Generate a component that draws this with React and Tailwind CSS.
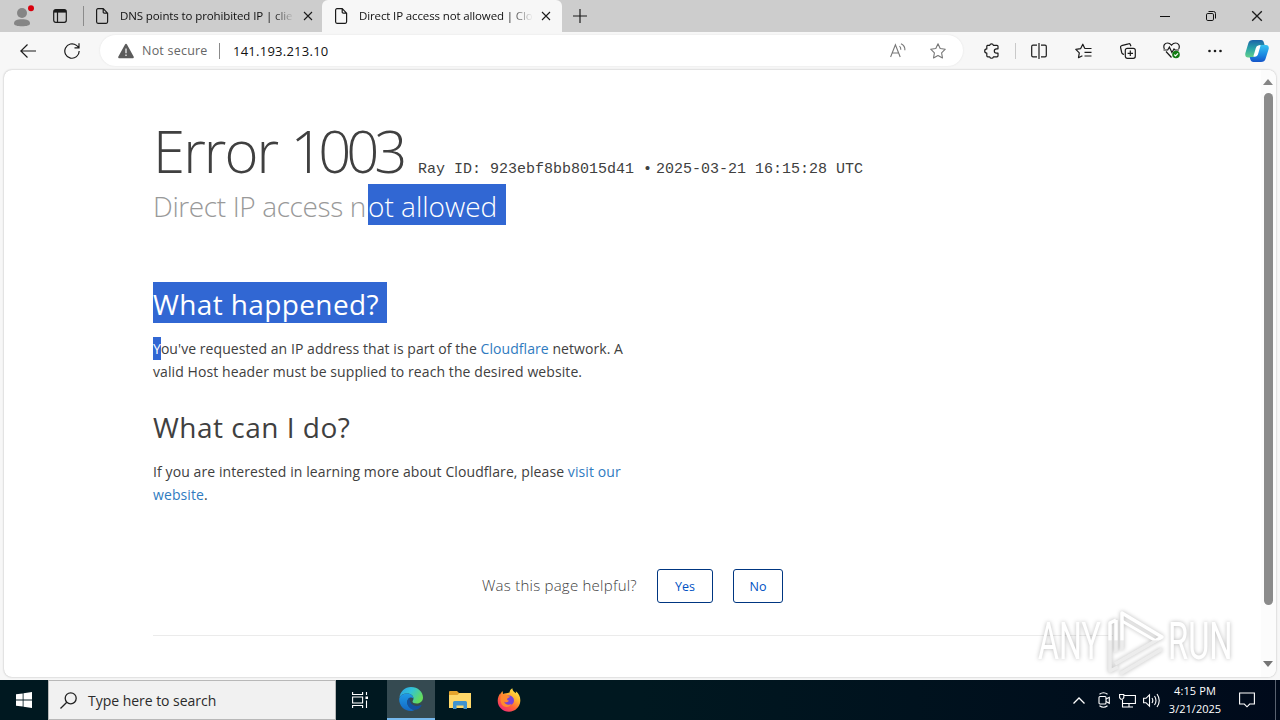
import React from 'react';

const UI = "font-['Open_Sans','Noto_Sans',sans-serif]";

function PageIcon() {
    return (
        <svg className="w-[14px] h-[16px] shrink-0" viewBox="0 0 14 16" fill="none" stroke="#1b1b1b" strokeWidth="1.2">
            <path d="M1.6 2.2C1.6 1.3 2.2.7 3 .7h5.2l4.4 4.5v8.6c0 .9-.6 1.5-1.4 1.5H3c-.8 0-1.4-.6-1.4-1.5z M8.2.7v3.3c0 .8.4 1.2 1.2 1.2h3.2" />
        </svg>
    );
}

function CrossIcon({ className }) {
    return (
        <svg className={className} viewBox="0 0 10 10" fill="none" stroke="#1b1b1b" strokeWidth="1.1">
            <path d="M1 1l8 8M9 1L1 9" />
        </svg>
    );
}

function TabStrip() {
    return (
        <div className="h-8 bg-[#cdcdcd] flex items-center shrink-0">
            <svg className="w-[22px] h-[24px] ml-[13px] shrink-0" viewBox="0 0 22 24">
                <circle cx="9" cy="9" r="5" fill="#858585" />
                <path d="M1 19.5C1 16.5 4 15.2 9 15.2s8 1.3 8 4.3c0 1.8-3.3 2.8-8 2.8s-8-1-8-2.8z" fill="#858585" />
                <circle cx="18" cy="4.2" r="3" fill="#d9000d" />
            </svg>
            <svg className="w-[14px] h-[14px] ml-[18px] shrink-0" viewBox="0 0 14 14" fill="none" stroke="#1b1b1b" strokeWidth="1.2">
                <rect x=".7" y=".7" width="12.6" height="12.6" rx="2" />
                <path d="M1 2.3h12" strokeWidth="2.6" />
                <path d="M4.5 3v10" />
            </svg>
            <div className="w-px h-5 bg-[#8b8b8b] ml-4" />
            <div className="flex items-center w-[238px] h-8 pl-[11px] pr-[9px] shrink-0">
                <PageIcon />
                <div className="ml-[11px] w-[174px] whitespace-nowrap text-[11.5px] tracking-[-0.11px] text-[#111] [mask-image:linear-gradient(to_right,#000_88%,transparent)]">
                    DNS points to prohibited IP | clie
                </div>
                <CrossIcon className="w-[10px] h-[10px] ml-auto" />
            </div>
            <div className="flex items-center w-[240px] h-8 pl-[12px] pr-[11px] bg-[#f7f7f7] rounded-t-md shrink-0">
                <PageIcon />
                <div className="ml-[11px] w-[174px] whitespace-nowrap text-[11.5px] tracking-[-0.13px] text-[#111] [mask-image:linear-gradient(to_right,#000_86%,transparent)]">
                    Direct IP access not allowed | Clo
                </div>
                <CrossIcon className="w-[10px] h-[10px] ml-auto" />
            </div>
            <svg className="w-[14px] h-[14px] ml-[11px]" viewBox="0 0 14 14" stroke="#1b1b1b" strokeWidth="1.2">
                <path d="M0 7h14M7 0v14" />
            </svg>
            <div className="ml-auto flex items-center pr-[17px]">
                <svg className="w-[10px] h-[10px]" viewBox="0 0 10 10" stroke="#111"><path d="M0 5.5h10" /></svg>
                <svg className="w-[10px] h-[10px] ml-[36px]" viewBox="0 0 10 10" fill="none" stroke="#111">
                    <rect x=".5" y="2.5" width="7" height="7" rx="1.3" />
                    <path d="M2.5 .5H7.5a2 2 0 012 2v5" />
                </svg>
                <CrossIcon className="w-[12px] h-[12px] ml-[35px]" />
            </div>
        </div>
    );
}

function CopilotIcon() {
    return (
        <svg className="w-6 h-6 shrink-0" viewBox="0 0 24 24">
            <defs>
                <linearGradient id="copL" x1="0" y1="0" x2="0" y2="1">
                    <stop offset="0" stopColor="#1b63a8" />
                    <stop offset=".5" stopColor="#2aa5a8" />
                    <stop offset="1" stopColor="#63d08b" />
                </linearGradient>
                <linearGradient id="copR" x1="0" y1="0" x2="0" y2="1">
                    <stop offset="0" stopColor="#36c3f2" />
                    <stop offset=".6" stopColor="#1a86e0" />
                    <stop offset="1" stopColor="#1554c8" />
                </linearGradient>
            </defs>
            <path d="M8 1h8c1.8 0 2.600 1.200 3 3l.6 2h-4c-2 0-2.800 1-3.300 2.600L10 16.500c-.6 1.500-1.400 2-3 2H3C.8 18.500-.2 16.600.4 14L3.400 4C4 2 5.500 1 8 1z" fill="url(#copL)" />
            <path d="M16 23H8.500c-1.800 0-2.800-1-3.300-3l-.5-2h3.500c2 0 2.900-.8 3.400-2.400l2.300-7.500C14.500 6.500 15.300 6 17 6h4c2.200 0 3.300 1.800 2.600 4.300L20.500 20c-.6 2-2 3-4.500 3z" fill="url(#copR)" />
            <path d="M10.800 9.200C11.400 7.300 12.300 6.600 14 6.600h1.600L13 15.200c-.5 1.600-1.500 2.300-3.200 2.300H8.300z" fill="#fff" />
        </svg>
    );
}

function Toolbar() {
    return (
        <div className="h-[37px] flex items-center shrink-0 pl-5">
            <svg className="w-4 h-4" viewBox="0 0 16 16" fill="none" stroke="#1b1b1b" strokeWidth="1.2">
                <path d="M16 8H.8M7.5 1.5L.8 8l6.700 6.500" />
            </svg>
            <svg className="w-4 h-4 ml-7" viewBox="0 0 16 16" fill="none" stroke="#1b1b1b" strokeWidth="1.2">
                <path d="M15.200 8A7.200 7.200 0 1 1 12.500 2.400L15 4.600M15 .3v4.500h-4.500" />
            </svg>
            <div className="ml-5 w-[863px] h-[31px] rounded-full bg-white flex items-center pl-[18px] pr-[17px] shrink-0 shadow-[0_0_2px_#e0e0e0]">
                <svg className="w-4 h-4" viewBox="0 0 16 16">
                    <path d="M7 1.500c.5-.9 1.500-.9 2 0l6.600 12c.5.900 0 1.700-1 1.700H1.400c-1 0-1.500-.8-1-1.700z" fill="#5b5b5b" />
                    <path d="M8 5.500v4.700M8 11.500v1.600" stroke="#ddd" strokeWidth="1.5" />
                </svg>
                <span className="ml-2 pt-[2px] w-[67px] whitespace-nowrap text-[12.5px] text-[#666] tracking-[0.22px]">Not secure</span>
                <span className="ml-[10px] w-px h-4 bg-[#8a8a8a]" />
                <span className="ml-[13px] pt-[2px] whitespace-nowrap text-[13px] text-[#111] tracking-[0.25px]">141.193.213.10</span>
                <svg className="w-4 h-[15px] ml-auto" viewBox="0 0 16 15" fill="none" stroke="#777" strokeWidth="1.1">
                    <path d="M.6 14L5.400 1.800 10.200 14M2.200 10h6.400M9.500 3.200c1 .9 1.400 2 1.300 3.500M11 .8c2.600 1.300 4.100 3.600 3.900 6.400" />
                </svg>
                <svg className="w-4 h-4 ml-6" viewBox="0 0 16 16" fill="none" stroke="#777" strokeWidth="1.1" strokeLinejoin="round">
                    <path d="M8 .8l2.200 4.700 5.100.7-3.700 3.600.9 5.200L8 12.500 3.500 15l.9-5.200L.7 6.200l5.100-.7z" />
                </svg>
            </div>
            <svg className="w-4 h-4 ml-[21px]" viewBox="0 0 16 16" fill="none" stroke="#1b1b1b" strokeWidth="1.2" strokeLinejoin="round">
                <path d="M3.300 2.300h2.400a1.900 1.900 0 013.700 0h3.600q1 0 1 1v2.500H12.500a2.200 2.200 0 000 4.400H14v2.600q0 1-1 1H9.400a1.900 1.900 0 01-3.700 0H3.800q-1 0-1-1v-2.700a2.100 2.100 0 010-4.200V3.300q0-1 1-1z" />
            </svg>
            <div className="w-px h-4 bg-[#c9c9c9] ml-[15px]" />
            <svg className="w-4 h-4 ml-[15px]" viewBox="0 0 16 16" fill="none" stroke="#1b1b1b" strokeWidth="1.2">
                <path d="M6 2.200H2Q.7 2.200.7 3.500v9Q.7 13.800 2 13.800h4M10 2.200h4q1.300 0 1.300 1.300v9q0 1.300-1.300 1.300h-4M8 0v16" />
            </svg>
            <svg className="w-[17px] h-4 ml-[28px]" viewBox="0 0 17 16" fill="none" stroke="#1b1b1b" strokeWidth="1.2" strokeLinejoin="round">
                <path d="M9.800 5.500L7.800 1.200 5.700 5.600.8 6.300l3.500 3.500-.8 4.900 3.900-2M9.800 5.500h6.700M9.500 9.300h7M9.500 13h7" />
            </svg>
            <svg className="w-4 h-4 ml-[28px]" viewBox="0 0 16 16" fill="none" stroke="#1b1b1b" strokeWidth="1.2" strokeLinejoin="round">
                <rect x="5.3" y="5.3" width="10" height="10" rx="2" />
                <path d="M10.300 7.600v5.400M7.600 10.300H13M4 11.500l-.9-.4Q2 10.700 1.700 9.500L.6 4.500Q.3 3.100 1.600 2.700L8.500.8q1.300-.4 1.900.9l.5 1.500" />
            </svg>
            <svg className="w-[18px] h-[17px] ml-[27px]" viewBox="0 0 18 17" fill="none" stroke="#1b1b1b" strokeWidth="1.2">
                <path d="M1.400 7C-.2 3.500 1.900 1 4.500 1 6.500 1 7.500 2 8.500 3.200 9.500 2 10.700 1 12.600 1c2.700 0 4.700 2.600 3.100 6M3 9.500l5.500 6M.5 8h4.200l1.700-3 2.500 5.500L11 7l1 1h4" />
                <circle cx="13" cy="12.5" r="3.8" fill="#127c13" stroke="none" />
                <path d="M11.200 12.600l1.300 1.300 2.500-2.600" stroke="#fff" />
            </svg>
            <svg className="w-[14px] h-4 ml-[27px]" viewBox="0 0 14 16" fill="#1b1b1b">
                <circle cx="1.500" cy="8" r="1.3" /><circle cx="7" cy="8" r="1.3" /><circle cx="12.500" cy="8" r="1.3" />
            </svg>
            <div className="ml-[23px]"><CopilotIcon /></div>
        </div>
    );
}

function ErrorPage() {
    return (
        <div className="w-[960px] ml-[149px] pt-[50px] text-[#404040] whitespace-nowrap">
            <div className="h-[63px] flex items-baseline">
                <h1 className="text-[58px] leading-[62px] font-light tracking-[-1.9px] w-[265px]">Error <span className="tracking-[-5.2px]">1003</span></h1>
                <span className="font-['Liberation_Mono',monospace] text-[15px] leading-[20px] w-[219px]">Ray ID: 923ebf8bb8015d41</span>
                <span className="ml-[6px] w-[13px] font-['Liberation_Mono',monospace] text-[15px]">•</span>
                <span className="font-['Liberation_Mono',monospace] text-[15px]">2025-03-21 16:15:28 UTC</span>
            </div>
            <h2 className="h-[41px] mt-px text-[28px] leading-[44px] font-light text-[#999] flex">
                <span className="w-[215px] tracking-[-0.38px]">Direct IP access n</span>
                <span className="w-[138px] h-[41px] bg-[#3167d3] text-white">ot allowed</span>
            </h2>
            <h2 className="mt-[57px] w-[234px] h-[41px] text-[28px] leading-[44px] tracking-[0.38px] bg-[#3167d3] text-white">What happened?</h2>
            <p className="mt-[15px] text-[14px] leading-[22.5px] tracking-[0.06px]">
                <span className="bg-[#3167d3] text-white py-[2px]">Y</span>ou've requested an IP address that is part of the <a className="text-[#2f7bbf]">Cloudflare</a> network. A<br />
                <span className="tracking-[0.09px]">valid Host header must be supplied to reach the desired website.</span>
            </p>
            <h2 className="mt-[22px] h-[41px] text-[28px] leading-[44px] tracking-[0.5px]">What can I do?</h2>
            <p className="mt-[15px] text-[14px] leading-[22.5px] tracking-[0.09px]">
                If you are interested in learning more about Cloudflare, please <a className="text-[#2f7bbf]">visit our<br />website</a>.
            </p>
            <div className="mt-[63px] pl-[329px] h-[34px] flex items-center">
                <span className="w-[156px] pb-px text-[15px] font-light tracking-[0.24px]">Was this page helpful?</span>
                <button className="ml-[19px] pt-[2px] w-[56px] h-[34px] border border-[#003681] rounded-[3px] text-[12.5px] text-[#0051c3]">Yes</button>
                <button className="ml-5 pt-[2px] w-[50px] h-[34px] border border-[#003681] rounded-[3px] text-[12.5px] text-[#0051c3]">No</button>
            </div>
            <div className="mt-8 h-px bg-[#ebebeb]" />
        </div>
    );
}

function Watermark() {
    return (
        <svg className="absolute left-[1030px] top-[602px] w-[210px] h-[76px] drop-shadow-[0_0_2px_rgba(0,0,0,0.28)]" viewBox="0 0 210 76">
            <defs>
                <linearGradient id="wm" x1="0" y1="0" x2="0" y2="76" gradientUnits="userSpaceOnUse">
                    <stop offset=".5" stopColor="#fff" />
                    <stop offset=".51" stopColor="#ececec" />
                </linearGradient>
            </defs>
            <g fill="url(#wm)" fontFamily="Roboto, sans-serif" fontSize="51">
                <text transform="translate(8 57) scale(.66 1)" textLength="95" lengthAdjust="spacingAndGlyphs">ANY</text>
                <text transform="translate(138 57) scale(.66 1)" textLength="98" lengthAdjust="spacingAndGlyphs">RUN</text>
            </g>
            <g fill="none" stroke="url(#wm)" strokeWidth="3.5" strokeLinejoin="round">
                <path d="M92 48V11l40 24-47 27" />
                <path d="M86 18l-6 3v48l8-4M86 18v32M90 72l42-25" />
                <path d="M92 19l34 20" strokeWidth="3" />
            </g>
        </svg>
    );
}

function Taskbar() {
    return (
        <div className="h-10 bg-[#001722] bg-linear-to-r from-[#001820] from-50% to-[#000a1b] flex items-center shrink-0 text-white">
            <svg className="w-4 h-4 ml-4" viewBox="0 0 16 16" fill="#fff">
                <path d="M0 2.300l6.700-.9v6.100H0zM7.500 1.300L16 .1v7.400H7.500zM0 8.400h6.700v6.200L0 13.700zM7.500 8.400H16v7.500l-8.500-1.200z" />
            </svg>
            <div className="ml-4 w-72 h-10 bg-[#f1f1f1] border border-[#b8b8b8] flex items-center pl-[11px] text-[#2b2b2b]">
                <svg className="w-[17px] h-[17px]" viewBox="0 0 17 17" fill="none" stroke="#222" strokeWidth="1.3">
                    <circle cx="10.700" cy="6.300" r="5.500" /><path d="M6.800 10.200L.5 16.500" />
                </svg>
                <span className="ml-[11px] text-[14px] tracking-[-0.03px] whitespace-nowrap">Type here to search</span>
            </div>
            <div className="w-[51px] flex justify-center pr-[3px]">
                <svg className="w-[17px] h-4" viewBox="0 0 17 16" fill="none" stroke="#fff" strokeWidth="1.1">
                    <path d="M.6 0v2.500h10V0M.6 16v-2.500h10V16M.6 5h10v6H.6zM14.500 0v3M14.500 8.500V16" />
                    <rect x="13.500" y="4.500" width="2.500" height="2.500" fill="#fff" stroke="none" />
                </svg>
            </div>
            <div className="w-12 h-10 bg-[#354a51] border-b-2 border-[#76b9ed] flex items-center justify-center">
                <svg className="w-6 h-6" viewBox="0 0 24 24">
                    <defs>
                        <linearGradient id="edgeT" x1="0" y1="0" x2="1" y2=".5"><stop stopColor="#2b9de6" /><stop offset=".5" stopColor="#32c3d7" /><stop offset="1" stopColor="#64dc5c" /></linearGradient>
                        <linearGradient id="edgeL" x1="0" y1="0" x2="0" y2="1"><stop stopColor="#1f9be7" /><stop offset="1" stopColor="#1468c4" /></linearGradient>
                    </defs>
                    <path d="M.4 11C1 4.500 6 0 12 0c7 0 12 5 12 10.500 0 3.500-2.700 6-6.200 6-2.800 0-4.300-1-4.300-2 0-.8 1-1.200 1-3C14.500 9 12 6.500 8.500 6.500 4 6.500 1 8.500.4 11z" fill="url(#edgeT)" />
                    <path d="M.2 12C.8 8.800 3.700 6.500 8 6.500c3.500 0 6.500 2.200 6.500 5-3-2.500-6.500.5-6.300 4 .2 4 4 7.500 8 7.300C14.500 23.700 13 24 12 24 5 24 0 18.500.2 12z" fill="url(#edgeL)" />
                    <path d="M8.200 15.500c-.1-2 1-4 2.800-4.900-1.500 5 3 9 7.500 8.500 1.200-.1 2.300-.6 3.200-1 .7-.2 1 .3.6.9-1.500 2.200-3.800 3.700-6.100 3.800-4 .2-7.800-3.300-8-7.300z" fill="#1351a0" />
                </svg>
            </div>
            <svg className="w-[22px] h-[19px] ml-[14px]" viewBox="0 0 22 19">
                <path d="M0 1q0-1 1-1h7l2 2h11q1 0 1 1v14H0z" fill="#e6a52c" />
                <path d="M0 4h8.500l2-2H22v15H0z" fill="#ffd869" />
                <path d="M4 18v-6.500q0-1.500 1.500-1.500h11q1.500 0 1.500 1.500V18h-3.500v-3.500h-7V18z" fill="#3f93cf" />
            </svg>
            <svg className="w-6 h-6 ml-[26px]" viewBox="0 0 24 24">
                <defs>
                    <linearGradient id="ffx" x1=".9" y1="0" x2=".2" y2="1"><stop stopColor="#fff44f" /><stop offset=".35" stopColor="#ffb52e" /><stop offset=".65" stopColor="#ff6237" /><stop offset="1" stopColor="#f0267b" /></linearGradient>
                </defs>
                <path d="M12.500 4.500C12.800 2.500 14 1 15.300.3c.2 2.500 2 3.500 3.500 5 .2-.5.1-1.300 0-2C22 5.500 23.500 9 23.300 13 23 19 18 23.700 12 23.700S.7 19 .7 12.700C.7 9.500 2 7 3.300 5.300l.2 1.400c.2-1.500 1-2.700 2.200-3.400L6 6c2-.8 4-.7 6.500-1.500z" fill="url(#ffx)" />
                <circle cx="12" cy="12.500" r="5" fill="#7743d9" />
                <path d="M4 8c2-2 5-2 7 0l2 .6c-.3 1.300-2.500 1.600-2.800 2.200-.2.800.2 1.700 1.800 1.700-.7 1.900-3.500 2.500-5 1C7.500 16 11 18 14.500 16c-2 4-8 4-10 0C3 13 3.200 10 4 8z" fill="#ff8a2e" />
            </svg>
            <svg className="w-3 h-[7px] ml-auto" viewBox="0 0 12 7" fill="none" stroke="#fff" strokeWidth="1.3"><path d="M.5 6.500L6 1l5.500 5.500" /></svg>
            <svg className="w-3 h-4 ml-[13px]" viewBox="0 0 12 16" fill="none" stroke="#fff" strokeWidth="1.1">
                <path d="M1.500 2.200Q5.500-.6 9.500 2.200M1.500 13.800q4 2.800 8 0" />
                <rect x="1" y="4.500" width="7" height="7.500" rx="1" /><path d="M8 7l3.300-1.700v6L8 9.600" />
            </svg>
            <svg className="w-[17px] h-[15px] ml-[9px]" viewBox="0 0 17 15" fill="none" stroke="#fff" strokeWidth="1.1">
                <path d="M5 2.500h11.400v8H3.500V7M10 10.500v3.500M6 14h8M3.500 7v7H6" /><path d="M.6 1.500h4.200v3.200l-1.300 1.600H1.900L.6 4.700z" />
            </svg>
            <svg className="w-[17px] h-[15px] ml-[7px]" viewBox="0 0 17 15" fill="none" stroke="#fff" strokeWidth="1.1">
                <path d="M.6 5.300H3l3.500-3.500v11.400L3 9.700H.6zM9 5q1.600 2.500 0 5M11.500 3q3 4.500 0 9M14 1q4.500 6.500 0 13" />
            </svg>
            <div className="w-[70px] text-center text-[11px] leading-[18px] whitespace-nowrap">
                <div className="tracking-[0.12px]">4:15 PM</div>
                <div className="tracking-[0.02px]">3/21/2025</div>
            </div>
            <svg className="w-4 h-4 ml-[9px]" viewBox="0 0 16 16" fill="none" stroke="#fff" strokeWidth="1.1">
                <path d="M.6 1h14.800v11h-4.700L8 14.800 5.300 12H.6z" />
            </svg>
            <div className="ml-[20px] mr-1 w-px h-10 bg-[#596270]" />
        </div>
    );
}

export default function App() {
    return (
        <div className={`relative w-[1280px] h-[720px] overflow-hidden flex flex-col bg-[#f7f7f7] ${UI}`}>
            <TabStrip />
            <Toolbar />
            <div className="h-[611px] px-1 pt-px pb-[3px] shrink-0">
                <div className="h-[607px] rounded-lg bg-white flex justify-between overflow-hidden shadow-[0_0_2px_#aaa]">
                    <ErrorPage />
                    <div className="w-[15px] pr-px bg-[#fcfcfc] flex flex-col items-center pt-[9px] pb-[10px]">
                        <svg className="w-[10px] h-[6px]" viewBox="0 0 10 6" fill="#858585"><path d="M0 6l5-6 5 6z" /></svg>
                        <div className="mt-2 w-[9px] h-[512px] rounded-full bg-[#8b8b8b]" />
                        <svg className="w-[10px] h-[6px] mt-auto" viewBox="0 0 10 6" fill="#757575"><path d="M0 0l5 6 5-6z" /></svg>
                    </div>
                </div>
            </div>
            <Taskbar />
            <Watermark />
        </div>
    );
}
